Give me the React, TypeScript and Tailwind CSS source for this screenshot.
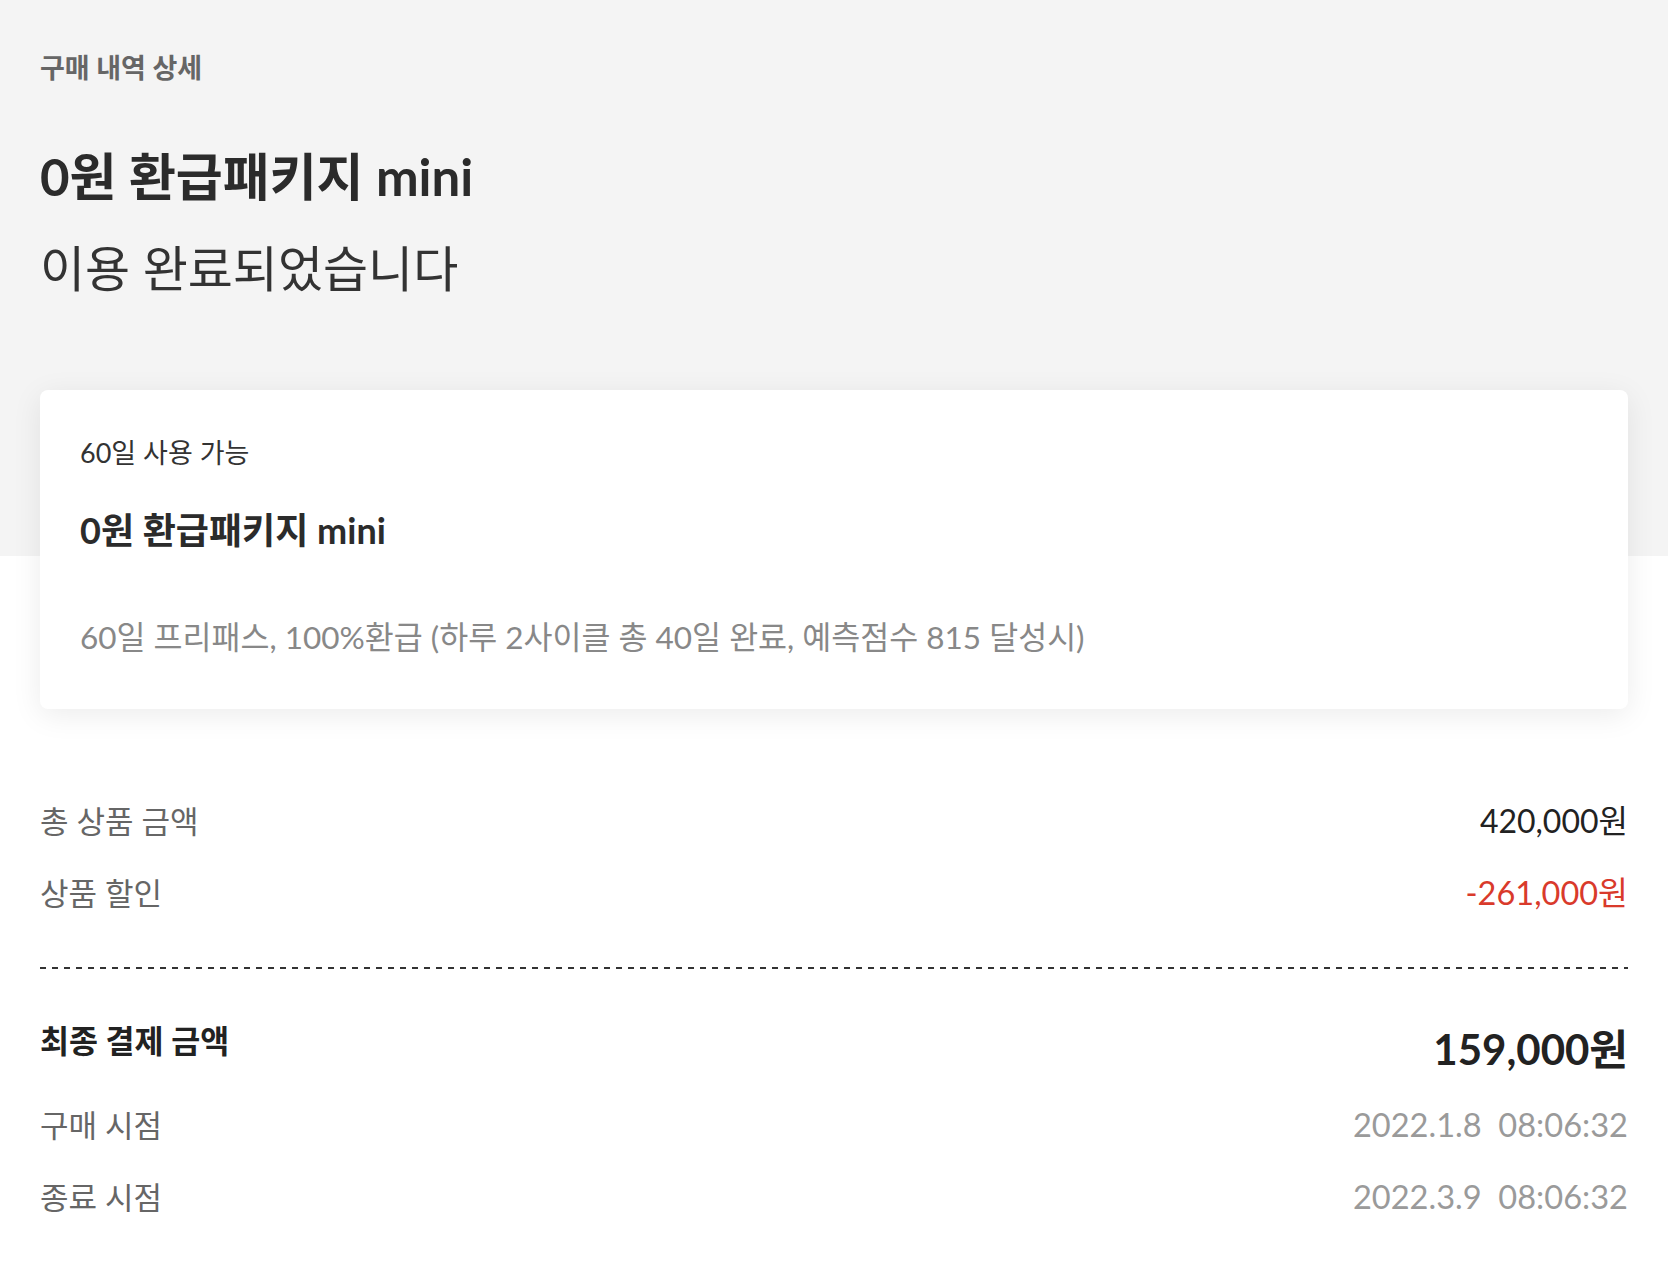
import React from "react";

const FONT = "font-['Lato','Noto_Sans_CJK_KR',sans-serif]";

interface RowProps {
  label: string;
  value: string;
  valueClass: string;
  labelClass?: string;
  rowClass?: string;
}

const Row: React.FC<RowProps> = ({ label, value, valueClass, labelClass, rowClass }) => (
  <div className={`flex items-center justify-between ${rowClass ?? "h-[72px]"}`}>
    <span className={labelClass ?? "text-[31px] text-[#666666]"}>{label}</span>
    <span className={`whitespace-pre ${valueClass}`}>{value}</span>
  </div>
);

export default function App() {
  return (
    <div className={`${FONT} min-h-[1262px] w-full bg-white text-[#2b2b2b]`}>
      {/* header band */}
      <div className="bg-[#f4f4f4] h-[556px] px-10 pt-[50px]">
        <p className="text-[27px] leading-[36px] font-bold text-[#666666]">
          구매 내역 상세
        </p>
        <h1 className="mt-[59px] text-[51px] leading-[64px] font-bold text-[#2b2b2b]">
          0원 환급패키지 mini
        </h1>
        <p className="mt-[27px] text-[49px] leading-[64px] text-[#333333]">
          이용 완료되었습니다
        </p>
      </div>

      {/* product card */}
      <div className="px-10 -mt-[166px]">
        <div className="bg-white rounded-lg shadow-[0_6px_30px_rgba(0,0,0,0.08)] px-10 pt-[45px] pb-[50px] h-[319px]">
          <p className="text-[27px] leading-[36px] text-[#333333]">
            60일 사용 가능
          </p>
          <p className="mt-[37px] text-[36px] leading-[44px] font-bold text-[#2b2b2b]">
            0원 환급패키지 mini
          </p>
          <p className="mt-[64px] text-[31.5px] leading-[42px] text-[#888888]">
            60일 프리패스, 100%환급 (하루 2사이클 총 40일 완료, 예측점수 815
            달성시)
          </p>
        </div>
      </div>

      {/* price summary */}
      <div className="px-10 pt-[76px]">
        <Row
          label="총 상품 금액"
          value="420,000원"
          valueClass="text-[32px] text-[#222222]"
        />
        <Row
          label="상품 할인"
          value="-261,000원"
          valueClass="text-[32.5px] text-[#d93a2b]"
        />
        <div className="mt-[38px] h-[2px] bg-[repeating-linear-gradient(to_right,#333333_0_6px,transparent_6px_12px)]" />
        <div className="mt-[41px]">
          <Row
            label="최종 결제 금액"
            rowClass="h-[79px]"
            labelClass="text-[31.5px] font-bold text-[#222222] -mt-[16px]"
            value="159,000원"
            valueClass="text-[42px] font-bold text-[#222222]"
          />
          <Row
            label="구매 시점"
            value="2022.1.8  08:06:32"
            valueClass="text-[32.6px] text-[#9a9a9a]"
          />
          <Row
            label="종료 시점"
            value="2022.3.9  08:06:32"
            valueClass="text-[32.6px] text-[#9a9a9a]"
          />
        </div>
      </div>
    </div>
  );
}
